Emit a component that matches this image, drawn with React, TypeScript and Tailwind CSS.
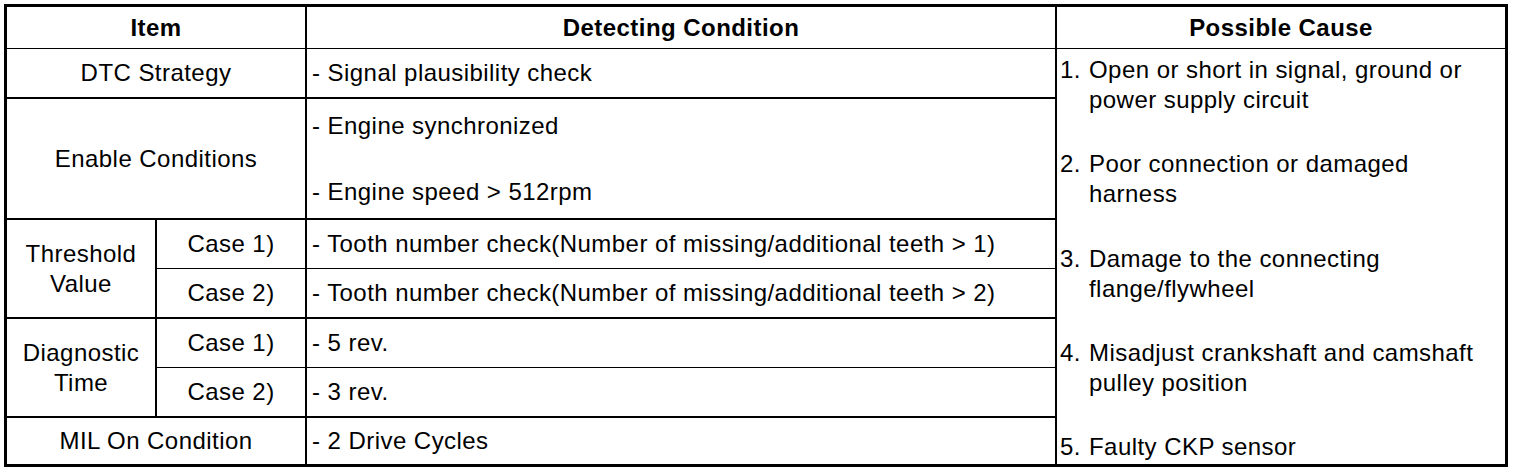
const font = { fontFamily: '"Liberation Sans", Arial, sans-serif' };

const causes = [
    ["1.", "Open or short in signal, ground or", "power supply circuit"],
    ["2.", "Poor connection or damaged", "harness"],
    ["3.", "Damage to the connecting", "flange/flywheel"],
    ["4.", "Misadjust crankshaft and camshaft", "pulley position"],
    ["5.", "Faulty CKP sensor"],
];

export default function App() {
    return (
        <div className="w-[1520px] h-[472px] bg-white pt-[4px] pl-[4px]" style={font}>
            <div className="w-[1504px] h-[463px] border-[3px] border-black grid grid-cols-[150px_150px_750px_1fr] grid-rows-[42px_50px_121px_49px_50px_49px_50px_46px] text-[24px] leading-[30px] tracking-[0.45px] text-black">
                {/* header */}
                <div className="col-span-2 border-r-2 border-b border-black flex items-center justify-center font-bold">
                    Item
                </div>
                <div className="border-r-2 border-b border-black flex items-center justify-center font-bold">
                    Detecting Condition
                </div>
                <div className="border-b border-black flex items-center justify-center font-bold">
                    Possible Cause
                </div>

                {/* DTC strategy */}
                <div className="col-span-2 border-r-2 border-b-2 border-black flex items-center justify-center">
                    DTC Strategy
                </div>
                <div className="border-r-2 border-b-2 border-black flex items-center pl-[5px]">
                    - Signal plausibility check
                </div>

                {/* possible causes */}
                <div className="col-start-4 row-start-2 row-span-7 flex flex-col justify-between pt-[6px] pb-[2px] pl-[3px]">
                    {causes.map(([num, ...lines]) => (
                        <div key={num} className="flex">
                            <span className="w-[29px] shrink-0">{num}</span>
                            <div>
                                {lines.map((l) => (
                                    <div key={l}>{l}</div>
                                ))}
                            </div>
                        </div>
                    ))}
                </div>

                {/* enable conditions */}
                <div className="col-span-2 border-r-2 border-b-2 border-black flex items-center justify-center">
                    Enable Conditions
                </div>
                <div className="border-r-2 border-b-2 border-black flex flex-col justify-center gap-[36px] pl-[5px]">
                    <div>- Engine synchronized</div>
                    <div>- Engine speed &gt; 512rpm</div>
                </div>

                {/* threshold value */}
                <div className="row-span-2 border-r-2 border-b-2 border-black flex flex-col items-center justify-center text-center">
                    <div>Threshold</div>
                    <div>Value</div>
                </div>
                <div className="border-r-2 border-b border-black flex items-center justify-center">Case 1)</div>
                <div className="border-r-2 border-b border-black flex items-center pl-[5px]">
                    - Tooth number check(Number of missing/additional teeth &gt; 1)
                </div>
                <div className="border-r-2 border-b-2 border-black flex items-center justify-center">Case 2)</div>
                <div className="border-r-2 border-b-2 border-black flex items-center pl-[5px]">
                    - Tooth number check(Number of missing/additional teeth &gt; 2)
                </div>

                {/* diagnostic time */}
                <div className="row-span-2 border-r-2 border-b-2 border-black flex flex-col items-center justify-center text-center">
                    <div>Diagnostic</div>
                    <div>Time</div>
                </div>
                <div className="border-r-2 border-b border-black flex items-center justify-center">Case 1)</div>
                <div className="border-r-2 border-b border-black flex items-center pl-[5px]">- 5 rev.</div>
                <div className="border-r-2 border-b-2 border-black flex items-center justify-center">Case 2)</div>
                <div className="border-r-2 border-b-2 border-black flex items-center pl-[5px]">- 3 rev.</div>

                {/* MIL */}
                <div className="col-span-2 border-r-2 border-black flex items-center justify-center">
                    MIL On Condition
                </div>
                <div className="border-r-2 border-black flex items-center pl-[5px]">- 2 Drive Cycles</div>
            </div>
        </div>
    );
}
